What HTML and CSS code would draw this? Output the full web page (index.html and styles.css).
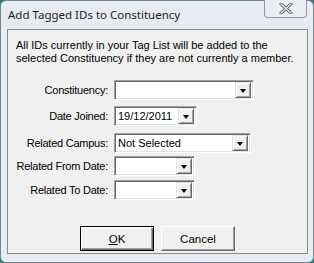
FILE: index.html
```html
<!DOCTYPE html>
<html lang="en">
<head>
    <meta charset="UTF-8">
    <title>Add Tagged IDs to Constituency</title>
    <link rel="stylesheet" href="styles.css">
</head>
<body>
    <div class="window">
        <div class="titlebar">
            <span class="title">Add Tagged IDs to Constituency</span>
            <div class="close-btn">
                <svg width="14" height="11" viewBox="0 0 14 11">
                    <path d="M2 1 L12 10 M12 1 L2 10" stroke="#4a4f55" stroke-width="3" stroke-linecap="round" fill="none"/>
                    <path d="M2 1 L12 10 M12 1 L2 10" stroke="#f4f6f8" stroke-width="1.2" stroke-linecap="round" fill="none"/>
                </svg>
            </div>
        </div>

        <div class="panel">
            <p class="intro">All IDs currently in your Tag List will be added to the<br>selected Constituency if they are not currently a member.</p>

            <div class="form">
                <div class="row row-1">
                    <label>Constituency:</label>
                    <div class="combo w-140"><span class="value"></span><span class="drop"></span></div>
                </div>
                <div class="row row-2">
                    <label>Date Joined:</label>
                    <div class="combo w-83"><span class="value">19/12/2011</span><span class="drop"></span></div>
                </div>
                <div class="row row-3">
                    <label>Related Campus:</label>
                    <div class="combo w-137"><span class="value">Not Selected</span><span class="drop"></span></div>
                </div>
                <div class="row row-4">
                    <label>Related From Date:</label>
                    <div class="combo w-81"><span class="value"></span><span class="drop"></span></div>
                </div>
                <div class="row row-5">
                    <label>Related To Date:</label>
                    <div class="combo w-81"><span class="value"></span><span class="drop"></span></div>
                </div>
            </div>

            <div class="buttons">
                <button class="btn btn-default"><u>O</u>K</button>
                <button class="btn">Cancel</button>
            </div>
        </div>
    </div>
</body>
</html>
```

FILE: styles.css
```css
body {
    margin: 0;
    background-color: #2d7a7c;
}

.window {
    width: 314px;
    height: 263px;
    box-sizing: border-box;
    background-color: #e6ecf2;
    border: 1px solid #6f8594;
    border-radius: 6px;
    display: flex;
    flex-direction: column;
}

.titlebar {
    height: 28px;
    display: flex;
    justify-content: space-between;
    align-items: flex-start;
    padding: 0 6px 0 7px;
}

.title {
    font-family: 'Noto Sans', sans-serif;
    font-size: 11.5px;
    color: #1e1e1e;
    margin-top: 6px;
}

.close-btn {
    width: 43px;
    height: 18px;
    box-sizing: border-box;
    margin-top: -1px;
    border: 1px solid #8d9aa6;
    border-top: none;
    border-radius: 0 0 4px 4px;
    background-color: #e9eef3;
    display: flex;
    align-items: center;
    justify-content: center;
}

.panel {
    height: 225px;
    box-sizing: border-box;
    margin: 0 5px 0 6px;
    background-color: #f0f0f0;
    border: 1px solid #8a8a8a;
    padding: 9px 8px 0 8px;
    font-family: 'Liberation Sans', Arial, sans-serif;
    font-size: 11px;
    color: #000;
}

.intro {
    margin: 0;
    line-height: 13px;
    white-space: nowrap;
}

.form {
    margin-top: 15px;
}

.row {
    display: flex;
    align-items: center;
    height: 20px;
}

.row label {
    width: 92px;
    white-space: nowrap;
    letter-spacing: -0.25px;
    margin-right: 6px;
    display: flex;
    justify-content: flex-end;
}

.row-2 { margin-top: 6px; }
.row-3 { margin-top: 7px; }
.row-4 { margin-top: 3px; }
.row-5 { margin-top: 4px; }

.combo {
    height: 20px;
    box-sizing: border-box;
    background-color: #fff;
    border-top: 1px solid #a0a0a0;
    border-left: 1px solid #a0a0a0;
    border-right: 1px solid #ffffff;
    border-bottom: 1px solid #ffffff;
    box-shadow: inset 1px 1px 0 #696969, inset -1px -1px 0 #e3e3e3;
    display: flex;
    align-items: center;
    padding: 2px;
}

.w-140 { width: 140px; }
.w-83 { width: 83px; }
.w-137 { width: 137px; }
.w-81 { width: 81px; }

.combo .value {
    flex: 1;
    padding-left: 1px;
    white-space: nowrap;
}

.drop {
    width: 16px;
    height: 16px;
    box-sizing: border-box;
    background-color: #f0f0f0;
    border-top: 1px solid #e3e3e3;
    border-left: 1px solid #e3e3e3;
    border-right: 1px solid #696969;
    border-bottom: 1px solid #696969;
    box-shadow: inset 1px 1px 0 #ffffff, inset -1px -1px 0 #a0a0a0;
    position: relative;
}

.drop::after {
    content: '';
    position: absolute;
    left: 4px;
    top: 6px;
    border-left: 3.5px solid transparent;
    border-right: 3.5px solid transparent;
    border-top: 4px solid #000;
}

.buttons {
    display: flex;
    justify-content: center;
    gap: 7px;
    margin-top: 26px;
}

.btn {
    width: 74px;
    height: 25px;
    box-sizing: border-box;
    font-family: 'Liberation Sans', Arial, sans-serif;
    font-size: 11.5px;
    color: #000;
    background-color: #f0f0f0;
    border-top: 1px solid #ffffff;
    border-left: 1px solid #ffffff;
    border-right: 1px solid #696969;
    border-bottom: 1px solid #696969;
    box-shadow: inset -1px -1px 0 #a0a0a0;
    padding: 0;
}

.btn-default {
    border: 1px solid #000;
    box-shadow: inset 1px 1px 0 #ffffff, inset -1px -1px 0 #696969, inset -2px -2px 0 #a0a0a0;
}
```
